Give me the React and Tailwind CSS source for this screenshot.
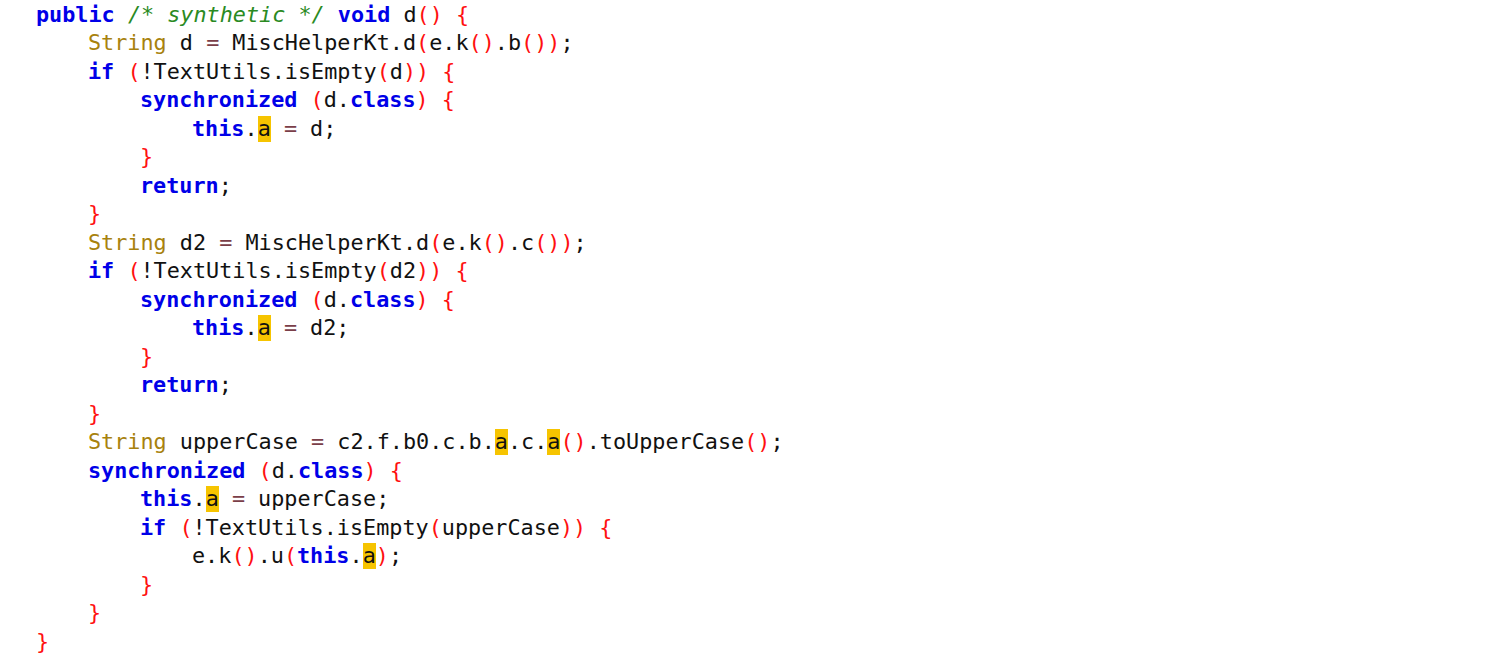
import React from "react";

const LINES = [
  [0, "public /* synthetic */ void d() {"],
  [1, "String d = MiscHelperKt.d(e.k().b());"],
  [1, "if (!TextUtils.isEmpty(d)) {"],
  [2, "synchronized (d.class) {"],
  [3, "this.§a§ = d;"],
  [2, "}"],
  [2, "return;"],
  [1, "}"],
  [1, "String d2 = MiscHelperKt.d(e.k().c());"],
  [1, "if (!TextUtils.isEmpty(d2)) {"],
  [2, "synchronized (d.class) {"],
  [3, "this.§a§ = d2;"],
  [2, "}"],
  [2, "return;"],
  [1, "}"],
  [1, "String upperCase = c2.f.b0.c.b.§a§.c.§a§().toUpperCase();"],
  [1, "synchronized (d.class) {"],
  [2, "this.§a§ = upperCase;"],
  [2, "if (!TextUtils.isEmpty(upperCase)) {"],
  [3, "e.k().u(this.§a§);"],
  [2, "}"],
  [1, "}"],
  [0, "}"],
];

const RE =
  /(\/\*.*?\*\/)|(§a§)|\b(public|void|if|synchronized|class|this|return)\b|\b(String)\b|([(){}])|(=)/g;

function tokenize(src) {
  const out = [];
  let last = 0;
  let m;
  RE.lastIndex = 0;
  while ((m = RE.exec(src))) {
    if (m.index > last) out.push(["plain", src.slice(last, m.index)]);
    if (m[1]) out.push(["comment", m[1]]);
    else if (m[2]) out.push(["hl", "a"]);
    else if (m[3]) out.push(["kw", m[3]]);
    else if (m[4]) out.push(["type", m[4]]);
    else if (m[5]) out.push(["paren", m[5]]);
    else if (m[6]) out.push(["op", m[6]]);
    last = RE.lastIndex;
  }
  if (last < src.length) out.push(["plain", src.slice(last)]);
  return out;
}

const CLS = {
  plain: "text-[#111111]",
  comment: "text-[#2a8a22] italic",
  hl: "inline-block bg-[#f6c400] text-[#111111] leading-[26px] h-[26px]",
  kw: "text-[#0000e8] font-bold",
  type: "text-[#a8820e]",
  paren: "text-[#ff1010]",
  op: "text-[#7a3e48]",
};

const INDENT = ["pl-0", "pl-[52px]", "pl-[104px]", "pl-[156px]"];

export default function App() {
  return (
    <div className="w-[1511px] h-[666px] bg-white overflow-hidden pt-[1px] pl-[36px] font-['DejaVu_Sans_Mono',monospace] text-[21.8px]">
      {LINES.map(([lvl, src], i) => (
        <div
          key={i}
          className={`h-[28.5px] flex items-center whitespace-pre ${INDENT[lvl]}`}
        >
          <span>
            {tokenize(src).map(([k, t], j) => (
              <span key={j} className={CLS[k]}>
                {t}
              </span>
            ))}
          </span>
        </div>
      ))}
    </div>
  );
}
